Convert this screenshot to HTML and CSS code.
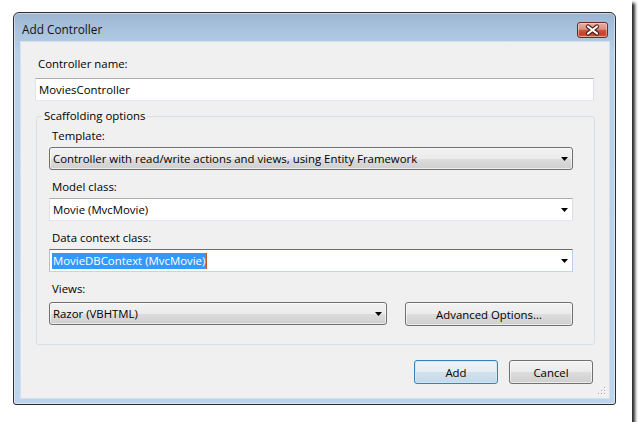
FILE: index.html
```html
<!DOCTYPE html>
<html>
<head>
<meta charset="utf-8">
<title>Add Controller</title>
<link rel="stylesheet" href="styles.css">
</head>
<body>
<div class="shot">
  <div class="window">
    <div class="titlebar">
      <span class="title">Add Controller</span>
      <div class="close">
        <svg width="31" height="16" viewBox="0 0 31 16">
          <path d="M11 4.5 L20 11.5 M20 4.5 L11 11.5" stroke="#4a1c16" stroke-width="4.2" stroke-linecap="round"/>
          <path d="M11 4.5 L20 11.5 M20 4.5 L11 11.5" stroke="#ffffff" stroke-width="2.2" stroke-linecap="round"/>
        </svg>
      </div>
    </div>
    <div class="client">
      <div class="lbl">Controller name:</div>
      <div class="textbox">MoviesController</div>
      <fieldset class="group">
        <legend>Scaffolding options</legend>
        <div class="field">
          <div class="lbl">Template:</div>
          <div class="combo dd"><span>Controller with read/write actions and views, using Entity Framework</span><svg class="arrow" width="7" height="4" viewBox="0 0 7 4"><polygon points="0,0 7,0 3.5,4" fill="#000"/></svg></div>
        </div>
        <div class="field">
          <div class="lbl">Model class:</div>
          <div class="combo edit"><span>Movie (MvcMovie)</span><svg class="arrow" width="7" height="4" viewBox="0 0 7 4"><polygon points="0,0 7,0 3.5,4" fill="#000"/></svg></div>
        </div>
        <div class="field">
          <div class="lbl">Data context class:</div>
          <div class="combo edit focus"><span class="seltext"><span class="sel">MovieDBContext (MvcMovie)</span><span class="caret"></span></span><svg class="arrow" width="7" height="4" viewBox="0 0 7 4"><polygon points="0,0 7,0 3.5,4" fill="#000"/></svg></div>
        </div>
        <div class="field">
          <div class="lbl">Views:</div>
          <div class="views-row">
            <div class="combo dd razor"><span>Razor (VBHTML)</span><svg class="arrow" width="7" height="4" viewBox="0 0 7 4"><polygon points="0,0 7,0 3.5,4" fill="#000"/></svg></div>
            <div class="btn adv">Advanced Options...</div>
          </div>
        </div>
      </fieldset>
      <div class="actions">
        <div class="btn default">Add</div>
        <div class="btn">Cancel</div>
      </div>
      <svg class="grip" width="9" height="9" viewBox="0 0 9 9">
        <g fill="#ffffff">
          <rect x="8" y="2" width="1" height="1"/><rect x="8" y="5" width="1" height="1"/><rect x="5" y="5" width="1" height="1"/>
          <rect x="8" y="8" width="1" height="1"/><rect x="5" y="8" width="1" height="1"/><rect x="2" y="8" width="1" height="1"/>
        </g>
        <g fill="#a8a8a8">
          <rect x="7" y="1" width="1" height="1"/><rect x="7" y="4" width="1" height="1"/><rect x="4" y="4" width="1" height="1"/>
          <rect x="7" y="7" width="1" height="1"/><rect x="4" y="7" width="1" height="1"/><rect x="1" y="7" width="1" height="1"/>
        </g>
      </svg>
    </div>
  </div>
</div>
</body>
</html>
```

FILE: styles.css
```css
html, body {
  margin: 0;
  background: #ffffff;
}

body {
  font-family: "Open Sans", "Noto Sans", sans-serif;
  font-size: 11.4px;
  color: #000;
}

.shot {
  width: 632px;
  height: 422px;
  box-sizing: border-box;
  padding: 12px 0 0 13px;
  background: #ffffff;
  box-shadow: 3px 3px 3px rgba(0, 0, 0, 0.85);
}

.window {
  width: 603px;
  height: 393px;
  box-sizing: border-box;
  border: 1px solid #2e2e2e;
  border-radius: 6px 6px 3px 3px;
  background: linear-gradient(#9cb5d1 0px, #abc4df 20px, #b8d0e9 40px, #bcd4ed 100%);
  box-shadow: inset 0 0 0 1px rgba(255, 255, 255, 0.45);
  padding: 0 6px 6px 7px;
  display: flex;
  flex-direction: column;
}

.titlebar {
  height: 29px;
  flex: 0 0 29px;
  display: flex;
  justify-content: space-between;
  align-items: flex-start;
}

.title {
  margin: 8px 0 0 1px;
  line-height: 16px;
  font-size: 11.8px;
  color: #111;
}

.close {
  margin: 9px 1px 0 0;
  width: 31px;
  height: 16px;
  box-sizing: border-box;
  border: 1px solid #6b2c26;
  border-radius: 3px;
  background: linear-gradient(#e9ada1 0%, #dc8f80 45%, #c9573f 52%, #c3412b 80%, #d0654c 100%);
  box-shadow: inset 0 0 0 1px rgba(255, 220, 210, 0.5);
  display: flex;
  align-items: center;
  justify-content: center;
  overflow: hidden;
}

.close svg {
  display: block;
  flex: 0 0 auto;
  margin: -1px;
}

.client {
  position: relative;
  flex: 1;
  background: #f0f0f0;
  padding: 14px 15px 14px 14px;
  box-shadow: 0 0 0 1px #d3e0ee;
}

.lbl {
  height: 16px;
  line-height: 16px;
  padding-left: 3px;
  white-space: nowrap;
}

.textbox {
  margin-top: 6px;
  height: 23px;
  box-sizing: border-box;
  border: 1px solid;
  border-color: #abadb3 #dbdfe6 #e3e9ef #e2e3ea;
  background: #ffffff;
  padding-left: 3px;
  line-height: 21px;
}

.group {
  margin: 7px -1px 0 1px;
  padding: 4px 21px 18px 12px;
  border: 1px solid #d5dfe5;
  border-radius: 3px;
  min-width: 0;
}

.group legend {
  padding: 0 2px;
  margin-left: -7px;
  line-height: 16px;
}

.field + .field {
  margin-top: 9px;
}

.field > .combo {
  margin-top: 3px;
}

.combo {
  height: 23px;
  box-sizing: border-box;
  border: 1px solid;
  display: flex;
  align-items: center;
  justify-content: space-between;
  padding: 0 4px 0 3px;
  white-space: nowrap;
}

.combo.dd {
  border-color: #707070;
  border-radius: 3px;
  background: linear-gradient(#f2f2f2 0%, #ebebeb 50%, #dddddd 50%, #cfcfcf 100%);
  box-shadow: inset 0 0 0 1px rgba(255, 255, 255, 0.6);
}

.combo.edit {
  border-color: #abadb3 #dbdfe6 #e3e9ef #e2e3ea;
  background: #ffffff;
}

.combo.edit.focus {
  border-color: #3d7bad #b5cfe7 #b7d9ed #a4c9e3;
  padding-left: 2px;
}

.arrow {
  display: block;
  flex: 0 0 auto;
}

.seltext {
  display: flex;
  align-items: center;
}

.sel {
  background: #3399ff;
  color: #ffffff;
  line-height: 16px;
  padding: 0 1px;
}

.caret {
  width: 1px;
  height: 16px;
  background: #c05a12;
}

.views-row {
  display: flex;
  align-items: flex-start;
  gap: 18px;
  margin-top: 5px;
}

.razor {
  flex: 0 0 338px;
}

.btn {
  height: 24px;
  box-sizing: border-box;
  border: 1px solid #707070;
  border-radius: 3px;
  background: linear-gradient(#f2f2f2 0%, #ebebeb 50%, #dddddd 50%, #cfcfcf 100%);
  box-shadow: inset 0 0 0 1px rgba(255, 255, 255, 0.6);
  display: flex;
  align-items: center;
  justify-content: center;
  white-space: nowrap;
}

.adv {
  flex: 1;
}

.actions {
  margin-top: 15px;
  margin-right: 1px;
  display: flex;
  justify-content: flex-end;
  gap: 11px;
}

.actions .btn {
  width: 84px;
}

.btn.default {
  border-color: #3c7fb1;
  background: linear-gradient(#eef4f9 0%, #e4edf5 50%, #d3e1ed 50%, #c6d8e8 100%);
  box-shadow: inset 0 0 0 1px rgba(200, 235, 252, 0.9);
}

.grip {
  position: absolute;
  right: 3px;
  bottom: 3px;
  display: block;
}
```
